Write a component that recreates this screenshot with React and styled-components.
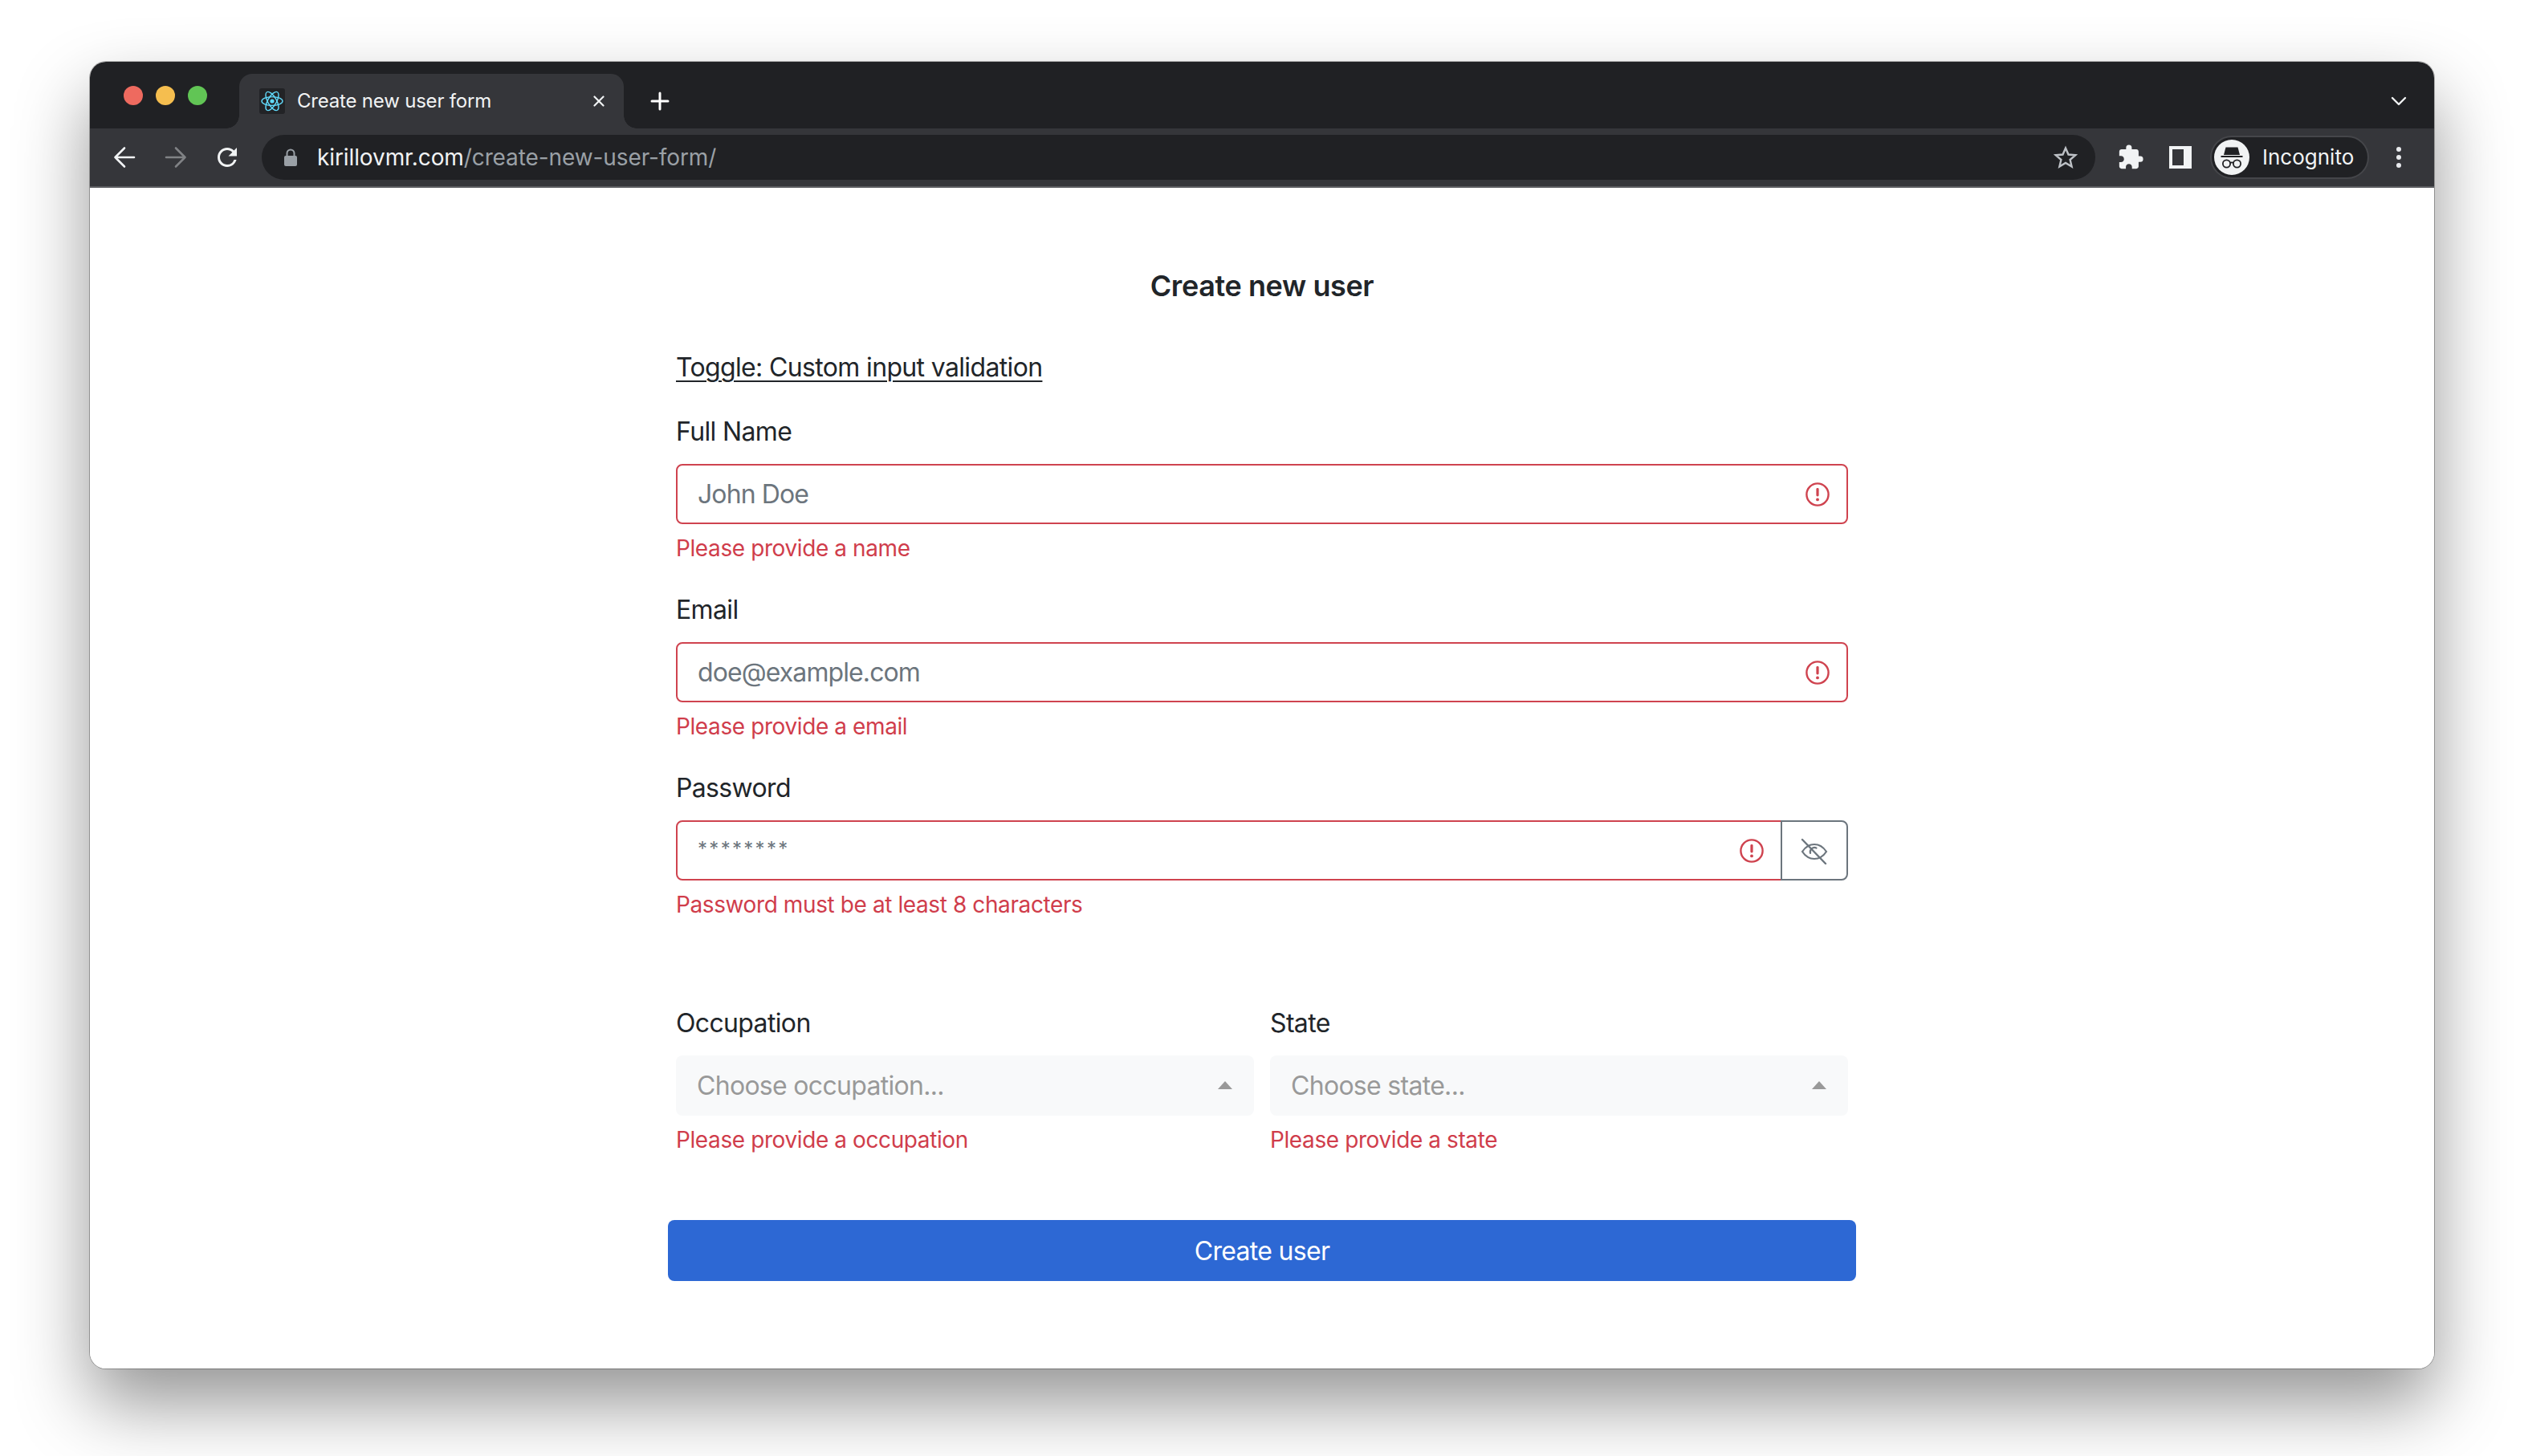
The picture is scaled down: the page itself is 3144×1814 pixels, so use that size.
import React from "react";
import styled, { createGlobalStyle } from "styled-components";
import { MdExtension, MdRefresh } from "react-icons/md";

const GlobalStyle = createGlobalStyle`
  html, body {
    margin: 0;
    padding: 0;
    background: #fff;
  }
  body {
    font-family: Inter, "Liberation Sans", sans-serif;
    color: #212529;
  }
  * {
    box-sizing: border-box;
  }
`;

const Stage = styled.div`
  height: 1814px;
  padding: 77px 112px 0;
  overflow: hidden;
`;

const Window = styled.div`
  width: 2920px;
  border-radius: 20px;
  background: #fff;
  overflow: hidden;
`;

const WindowShadow = styled.div`
  width: 2920px;
  border-radius: 20px;
  box-shadow: 0 0 0 1px rgba(0, 0, 0, 0.28), 0 44px 90px rgba(0, 0, 0, 0.42);
`;

const TabStrip = styled.div`
  height: 83px;
  background: #202124;
  display: flex;
  align-items: flex-end;
`;

const Lights = styled.div`
  width: 186px;
  align-self: flex-start;
  padding: 30px 0 0 42px;
  display: flex;
  gap: 16px;
`;

const Light = styled.span`
  width: 24px;
  height: 24px;
  border-radius: 50%;
  background: ${(p) => p.$color};
`;

const Tab = styled.div`
  position: relative;
  width: 479px;
  height: 68px;
  padding: 0 24px 0 25px;
  background: #35363a;
  border-radius: 16px 16px 0 0;
  display: flex;
  align-items: center;
  &::before,
  &::after {
    content: "";
    position: absolute;
    bottom: 0;
    width: 16px;
    height: 16px;
  }
  &::before {
    left: -16px;
    background: radial-gradient(circle at 0 0, transparent 15.5px, #35363a 16px);
  }
  &::after {
    right: -16px;
    background: radial-gradient(circle at 100% 0, transparent 15.5px, #35363a 16px);
  }
`;

const Favicon = styled.span`
  width: 32px;
  height: 32px;
  border-radius: 3px;
  background: #222326;
  margin-right: 15px;
  display: flex;
`;

const TabTitle = styled.span`
  flex: 1;
  font-size: 24px;
  line-height: 32px;
  letter-spacing: -0.2px;
  color: #f1f3f4;
  white-space: nowrap;
`;

const NewTab = styled.span`
  display: flex;
  height: 68px;
  align-items: center;
  margin-left: 33px;
`;

const StripEnd = styled.span`
  margin-left: auto;
  margin-right: 34px;
  height: 68px;
  display: flex;
  align-items: center;
`;

const Toolbar = styled.div`
  height: 74px;
  padding: 0 40px 0 29px;
  background: #35363a;
  border-bottom: 2px solid #5c5d61;
  display: flex;
  align-items: center;
`;

const ToolIcon = styled.span`
  display: flex;
  margin-left: ${(p) => p.$gap || 0}px;
`;

const Omnibox = styled.div`
  flex: 1;
  height: 56px;
  margin-left: 25px;
  padding: 0 22px 0 27px;
  border-radius: 28px;
  background: #202124;
  display: flex;
  align-items: center;
`;

const Url = styled.span`
  flex: 1;
  margin-left: 24px;
  font-size: 28px;
  line-height: 36px;
  letter-spacing: -0.1px;
  color: #9aa0a6;
  white-space: nowrap;
  & b {
    font-weight: 400;
    color: #f1f3f4;
  }
`;

const IncognitoPill = styled.div`
  width: 198px;
  height: 54px;
  margin-left: 23px;
  padding-left: 3px;
  border: 2px solid #45464a;
  border-radius: 27px;
  background: #202124;
  display: flex;
  align-items: center;
`;

const Avatar = styled.span`
  width: 44px;
  height: 44px;
  display: flex;
`;

const PillText = styled.span`
  margin-left: 16px;
  font-size: 26px;
  line-height: 32px;
  color: #f1f3f4;
`;

const Dots = styled.span`
  width: 8px;
  margin-left: 33px;
  display: flex;
  flex-direction: column;
  gap: 4px;
  & i {
    width: 6px;
    height: 6px;
    margin-left: 1px;
    border-radius: 50%;
    background: #e8eaed;
  }
`;

const Content = styled.main`
  padding: 100px 730px 109px;
  display: flex;
  flex-direction: column;
`;

const Heading = styled.h1`
  margin: 0 0 60px;
  font-size: 36px;
  line-height: 44px;
  font-weight: 600;
  letter-spacing: -0.4px;
  text-align: center;
  color: #212529;
`;

const ToggleLink = styled.a`
  display: block;
  margin-bottom: 40px;
  font-size: 32px;
  line-height: 40px;
  letter-spacing: -0.65px;
  color: #212529;
  text-decoration: underline;
  text-decoration-thickness: 2px;
  text-underline-offset: 5px;
`;

const Field = styled.div`
  margin-bottom: 39px;
  &:last-of-type {
    margin-bottom: 0;
  }
`;

const Label = styled.label`
  display: block;
  margin-bottom: 20px;
  font-size: 32px;
  line-height: 40px;
  letter-spacing: -0.65px;
  color: #212529;
`;

const InputGroup = styled.div`
  display: flex;
`;

const Input = styled.div`
  flex: 1;
  height: 75px;
  padding: 0 21px 0 25px;
  border: 2px solid #cf434f;
  border-radius: ${(p) => (p.$joined ? "8px 0 0 8px" : "8px")};
  display: flex;
  align-items: center;
  justify-content: space-between;
`;

const Placeholder = styled.span`
  font-size: 32px;
  line-height: 40px;
  letter-spacing: -0.9px;
  color: #6c757d;
`;

const Masked = styled(Placeholder)`
  font-size: 24px;
  letter-spacing: 2.3px;
  margin-top: -4px;
`;

const EyeButton = styled.div`
  width: 84px;
  height: 75px;
  margin-left: -2px;
  border: 2px solid #6c757d;
  border-radius: 0 8px 8px 0;
  display: flex;
  align-items: center;
  justify-content: center;
`;

const ErrorText = styled.div`
  margin-top: 12px;
  font-size: 28px;
  line-height: 36px;
  letter-spacing: -0.4px;
  color: #d03d4b;
`;

const SelectRow = styled.div`
  margin-top: 71px;
  display: grid;
  grid-template-columns: 1fr 1fr;
  gap: 20px;
`;

const Select = styled.div`
  height: 75px;
  padding: 0 27px 0 26px;
  border-radius: 8px;
  background: #f8f9fa;
  display: flex;
  align-items: center;
  justify-content: space-between;
`;

const SelectText = styled.span`
  font-size: 32px;
  line-height: 40px;
  letter-spacing: -0.7px;
  color: #999;
`;

const Caret = styled.span`
  width: 0;
  height: 0;
  border-left: 9px solid transparent;
  border-right: 9px solid transparent;
  border-bottom: 10px solid #999;
  margin-top: -2px;
`;

const SubmitButton = styled.button`
  height: 76px;
  margin: 82px -10px 0;
  border: 0;
  border-radius: 8px;
  background: #2d68d4;
  font-family: inherit;
  font-size: 32px;
  letter-spacing: -0.7px;
  color: #fff;
`;

const AtomIcon = () => (
  <svg width="32" height="32" viewBox="0 0 32 32" fill="none" stroke="#61dafb" strokeWidth="1.4">
    <ellipse cx="16" cy="16" rx="13" ry="5.4" />
    <ellipse cx="16" cy="16" rx="13" ry="5.4" transform="rotate(60 16 16)" />
    <ellipse cx="16" cy="16" rx="13" ry="5.4" transform="rotate(120 16 16)" />
    <circle cx="16" cy="16" r="2.6" fill="#61dafb" stroke="none" />
  </svg>
);

const CloseIcon = () => (
  <svg width="14" height="14" viewBox="0 0 14 14" stroke="#f1f3f4" strokeWidth="2.2" strokeLinecap="round">
    <path d="M1.5 1.5l11 11M12.5 1.5l-11 11" />
  </svg>
);

const PlusIcon = () => (
  <svg width="24" height="24" viewBox="0 0 24 24" stroke="#fff" strokeWidth="3" strokeLinecap="round">
    <path d="M12 2v20M2 12h20" />
  </svg>
);

const ChevronIcon = () => (
  <svg width="20" height="12" viewBox="0 0 20 12" fill="none" stroke="#f1f3f4" strokeWidth="2.4" strokeLinecap="round" strokeLinejoin="round">
    <path d="M2 2l8 8 8-8" />
  </svg>
);

const ArrowIcon = ({ flip, color }) => (
  <svg width="28" height="28" viewBox="0 0 28 28" fill="none" stroke={color} strokeWidth="2.6" strokeLinecap="round" strokeLinejoin="round" transform={flip ? "scale(-1 1)" : undefined}>
    <path d="M26 14H2.5M14 2.5L2.5 14 14 25.5" />
  </svg>
);

const LockIcon = () => (
  <svg width="18" height="24" viewBox="0 0 18 24" fill="none">
    <path d="M4.5 11V7a4.5 4.5 0 0 1 9 0v4" stroke="#9aa0a6" strokeWidth="2" />
    <rect x="1" y="10" width="16" height="13" rx="2" fill="#9aa0a6" />
  </svg>
);

const StarIcon = () => (
  <svg width="30" height="30" viewBox="0 0 30 30" fill="none" stroke="#bdc1c6" strokeWidth="2.4" strokeLinejoin="miter">
    <path d="M15 3.5l3.5 8 8.7.8-6.6 5.7 2 8.5L15 21.9l-7.6 4.6 2-8.5-6.6-5.7 8.7-.8z" />
  </svg>
);

const PanelIcon = () => (
  <svg width="28" height="28" viewBox="0 0 28 28">
    <path fillRule="evenodd" d="M0 0h28v28H0zM4 4v20h14V4z" fill="#f1f3f4" />
  </svg>
);

const IncognitoIcon = () => (
  <svg width="44" height="44" viewBox="0 0 44 44">
    <circle cx="22" cy="22" r="22" fill="#f1f3f4" />
    <path d="M14.5 9.5h15l2.5 9.5H12z" fill="#202124" />
    <rect x="8.5" y="20" width="27" height="2" fill="#202124" />
    <g fill="none" stroke="#202124" strokeWidth="1.8">
      <circle cx="15.5" cy="30" r="4.6" />
      <circle cx="28.5" cy="30" r="4.6" />
      <path d="M20 29q2-1.4 4 0" />
    </g>
  </svg>
);

const AlertIcon = () => (
  <svg width="30" height="30" viewBox="0 0 30 30" fill="none">
    <circle cx="15" cy="15" r="13.6" stroke="#cf434f" strokeWidth="2.4" />
    <rect x="13.4" y="7" width="3.2" height="10.5" rx="1.4" fill="#cf434f" />
    <circle cx="15" cy="21.4" r="1.9" fill="#cf434f" />
  </svg>
);

const EyeOffIcon = () => (
  <svg width="34" height="34" viewBox="0 0 34 34" fill="none" stroke="#6c757d" strokeWidth="2.2" strokeLinecap="round">
    <path d="M2 18c4-6 9-9 15-9s11 3 15 9c-4 6-9 9-15 9s-11-3-15-9z" />
    <path d="M12 20a5.5 5.5 0 0 1 7.5-6.5" />
    <path d="M2 3l29 30" strokeWidth="2.4" />
  </svg>
);

const App = () => {
  return (
    <Stage>
      <GlobalStyle />
      <WindowShadow>
        <Window>
          <TabStrip>
            <Lights>
              <Light $color="#ee6a5f" />
              <Light $color="#f5be4f" />
              <Light $color="#61c555" />
            </Lights>
            <Tab>
              <Favicon>
                <AtomIcon />
              </Favicon>
              <TabTitle>Create new user form</TabTitle>
              <CloseIcon />
            </Tab>
            <NewTab>
              <PlusIcon />
            </NewTab>
            <StripEnd>
              <ChevronIcon />
            </StripEnd>
          </TabStrip>
          <Toolbar>
            <ToolIcon>
              <ArrowIcon color="#f1f3f4" />
            </ToolIcon>
            <ToolIcon $gap={36}>
              <ArrowIcon flip color="#808285" />
            </ToolIcon>
            <ToolIcon $gap={32}>
              <MdRefresh size={36} color="#f1f3f4" />
            </ToolIcon>
            <Omnibox>
              <LockIcon />
              <Url>
                <b>kirillovmr.com</b>/create-new-user-form/
              </Url>
              <StarIcon />
            </Omnibox>
            <ToolIcon $gap={27}>
              <MdExtension size={34} color="#f1f3f4" />
            </ToolIcon>
            <ToolIcon $gap={31}>
              <PanelIcon />
            </ToolIcon>
            <IncognitoPill>
              <Avatar>
                <IncognitoIcon />
              </Avatar>
              <PillText>Incognito</PillText>
            </IncognitoPill>
            <Dots>
              <i />
              <i />
              <i />
            </Dots>
          </Toolbar>
          <Content>
            <Heading>Create new user</Heading>
            <ToggleLink>Toggle: Custom input validation</ToggleLink>
            <Field>
              <Label>Full Name</Label>
              <Input>
                <Placeholder>John Doe</Placeholder>
                <AlertIcon />
              </Input>
              <ErrorText>Please provide a name</ErrorText>
            </Field>
            <Field>
              <Label>Email</Label>
              <Input>
                <Placeholder>doe@example.com</Placeholder>
                <AlertIcon />
              </Input>
              <ErrorText>Please provide a email</ErrorText>
            </Field>
            <Field>
              <Label>Password</Label>
              <InputGroup>
                <Input $joined>
                  <Masked>********</Masked>
                  <AlertIcon />
                </Input>
                <EyeButton>
                  <EyeOffIcon />
                </EyeButton>
              </InputGroup>
              <ErrorText>Password must be at least 8 characters</ErrorText>
            </Field>
            <SelectRow>
              <div>
                <Label>Occupation</Label>
                <Select>
                  <SelectText>Choose occupation...</SelectText>
                  <Caret />
                </Select>
                <ErrorText>Please provide a occupation</ErrorText>
              </div>
              <div>
                <Label>State</Label>
                <Select>
                  <SelectText>Choose state...</SelectText>
                  <Caret />
                </Select>
                <ErrorText>Please provide a state</ErrorText>
              </div>
            </SelectRow>
            <SubmitButton>Create user</SubmitButton>
          </Content>
        </Window>
      </WindowShadow>
    </Stage>
  );
};

export default App;
